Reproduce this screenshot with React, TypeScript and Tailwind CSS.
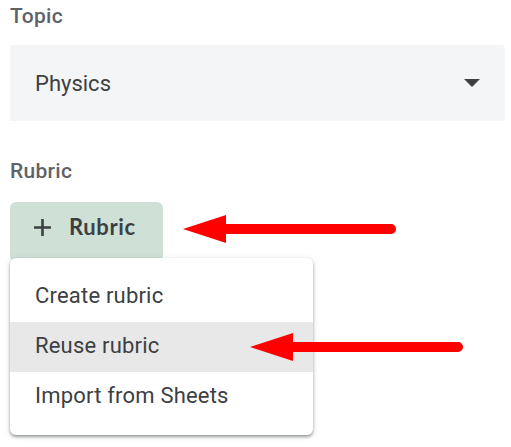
import React from "react";

const Arrow = ({ className }: { className: string }) => (
  <svg className={className} width="215" height="30" viewBox="0 0 215 30">
    <polygon points="0,15 43,1 43,29" fill="#ff0000" />
    <line x1="40" y1="15" x2="208" y2="15" stroke="#ff0000" strokeWidth="10" strokeLinecap="round" />
  </svg>
);

const App = () => {
  return (
    <div
      className="relative w-[511px] h-[447px] bg-white overflow-hidden pl-[10px] pr-[6px] pt-[4px]"
      style={{ fontFamily: "Roboto, 'Liberation Sans', sans-serif" }}
    >
      <div className="text-[21px] leading-[24px] font-medium text-[#5f6368] tracking-[0.3px]">Topic</div>

      <div className="mt-[17px] h-[76px] bg-[#f4f5f6] rounded-t-[4px] flex items-center justify-between pl-[25px] pr-[25px]">
        <span className="text-[22px] text-[#3c4043]">Physics</span>
        <svg width="16" height="8" viewBox="0 0 16 8">
          <polygon points="0,0 16,0 8,8" fill="#3c4043" />
        </svg>
      </div>

      <div className="mt-[38px] text-[21px] leading-[24px] font-medium text-[#5f6368] tracking-[0.3px]">Rubric</div>

      <button className="mt-[19px] w-[153px] h-[60px] bg-[#cfe0d7] rounded-[6px] flex items-start pt-[13px] pl-[23px] gap-[17px] text-[#3c4043]">
        <svg width="19" height="19" viewBox="0 0 19 19" className="mt-[3px]">
          <path d="M9.5 1v17M1 9.5h17" stroke="#3c4043" strokeWidth="2.6" />
        </svg>
        <span className="text-[22px] leading-[24px] font-bold tracking-[0.6px]" style={{ fontFamily: "Lato, 'Open Sans', sans-serif" }}>
          Rubric
        </span>
      </button>

      <Arrow className="absolute left-[183px] top-[214px]" />

      <div className="absolute left-[10px] top-[258px] w-[303px] h-[177px] bg-white rounded-[6px] shadow-[0_2px_3px_rgba(60,64,67,0.45),0_1px_6px_rgba(60,64,67,0.15)] py-[14px]">
        {["Create rubric", "Reuse rubric", "Import from Sheets"].map((t, i) => (
          <div
            key={t}
            className={
              "h-[50px] flex items-center pl-[25px] pb-[3px] text-[22px] tracking-[0.2px] text-[#3c4043] " +
              (i === 1 ? "bg-[#e8e8e8]" : "")
            }
          >
            {t}
          </div>
        ))}
      </div>

      <Arrow className="absolute left-[250px] top-[332px]" />
    </div>
  );
};

export default App;
